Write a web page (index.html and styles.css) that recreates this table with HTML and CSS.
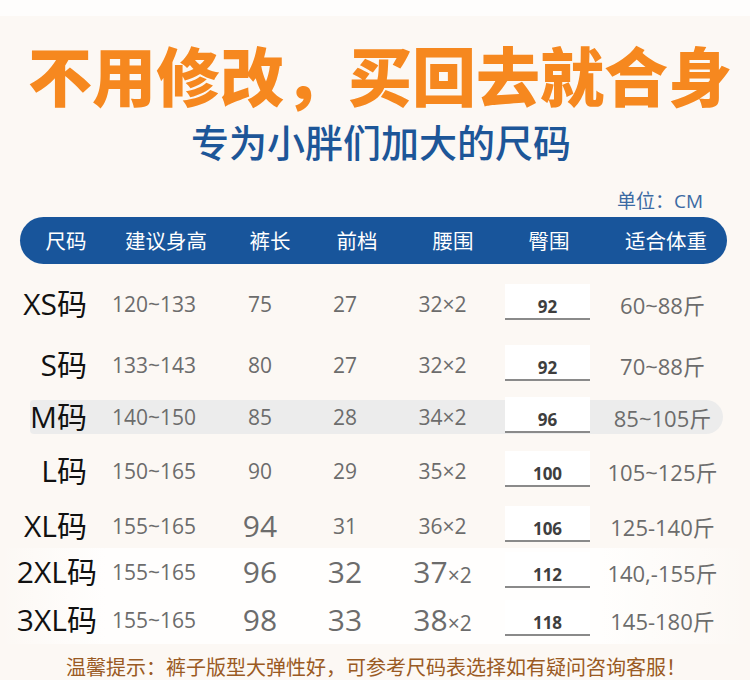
FILE: index.html
```html
<!DOCTYPE html>
<html lang="zh">
<head>
<meta charset="utf-8">
<link rel="stylesheet" href="styles.css">
</head>
<body>
<div class="page">
  <div class="topstrip"></div>
  <h1 class="title">不用修改，买回去就合身</h1>
  <h2 class="subtitle">专为小胖们加大的尺码</h2>
  <div class="unit">单位：CM</div>
  <div class="thead">
    <div class="th">尺码</div>
    <div class="th">建议身高</div>
    <div class="th">裤长</div>
    <div class="th">前档</div>
    <div class="th">腰围</div>
    <div class="th">臀围</div>
    <div class="th th-last">适合体重</div>
  </div>
  <div class="rows">
    <div class="row r-xs">
      <div class="size">XS码</div>
      <div class="h">120~133</div>
      <div class="v">75</div>
      <div class="v">27</div>
      <div class="v">32×2</div>
      <div class="hip"><span>92</span></div>
      <div class="v wt">60~88斤</div>
    </div>
    <div class="row r-s">
      <div class="size">S码</div>
      <div class="h">133~143</div>
      <div class="v">80</div>
      <div class="v">27</div>
      <div class="v">32×2</div>
      <div class="hip"><span>92</span></div>
      <div class="v wt">70~88斤</div>
    </div>
    <div class="row r-m">
      <div class="band"></div>
      <div class="size">M码</div>
      <div class="h">140~150</div>
      <div class="v">85</div>
      <div class="v">28</div>
      <div class="v">34×2</div>
      <div class="hip"><span>96</span></div>
      <div class="v wt">85~105斤</div>
    </div>
    <div class="row r-l">
      <div class="size">L码</div>
      <div class="h">150~165</div>
      <div class="v">90</div>
      <div class="v">29</div>
      <div class="v">35×2</div>
      <div class="hip"><span>100</span></div>
      <div class="v wt">105~125斤</div>
    </div>
    <div class="row r-xl">
      <div class="size">XL码</div>
      <div class="h">155~165</div>
      <div class="v big">94</div>
      <div class="v">31</div>
      <div class="v">36×2</div>
      <div class="hip"><span>106</span></div>
      <div class="v wt">125-140斤</div>
    </div>
    <div class="row r-2xl">
      <div class="size wide">2XL码</div>
      <div class="h">155~165</div>
      <div class="v big">96</div>
      <div class="v big">32</div>
      <div class="v"><span class="big">37</span>×2</div>
      <div class="hip"><span>112</span></div>
      <div class="v wt">140,-155斤</div>
    </div>
    <div class="row r-3xl">
      <div class="size wide">3XL码</div>
      <div class="h">155~165</div>
      <div class="v big">98</div>
      <div class="v big">33</div>
      <div class="v"><span class="big">38</span>×2</div>
      <div class="hip"><span>118</span></div>
      <div class="v wt">145-180斤</div>
    </div>
  </div>
  <p class="tip">温馨提示：裤子版型大弹性好，可参考尺码表选择如有疑问咨询客服！</p>
</div>
</body>
</html>
```
FILE: styles.css
```css
html, body {
  margin: 0;
  padding: 0;
}
body {
  background: #fcf8f4;
  font-family: "Open Sans", "Noto Sans CJK SC", sans-serif;
  width: 750px;
  height: 680px;
  overflow: hidden;
}
.page {
  position: relative;
  width: 750px;
  height: 680px;
}
.topstrip {
  height: 16px;
  background: #fefdfc;
}
.title {
  margin: 22px 0 0 10px;
  height: 70px;
  line-height: 70px;
  font-family: "Noto Sans CJK SC", sans-serif;
  font-weight: 900;
  font-size: 64px;
  color: #f6881f;
  text-align: center;
}
.subtitle {
  margin: 11px 0 0 12px;
  height: 44px;
  line-height: 44px;
  font-family: "Noto Sans CJK SC", sans-serif;
  font-weight: 500;
  font-size: 38px;
  color: #1d5698;
  text-align: center;
}
.unit {
  margin-top: 28px;
  height: 20px;
  line-height: 20px;
  font-family: "Open Sans", "Noto Sans CJK SC", sans-serif;
  font-size: 19px;
  color: #3b6aa3;
  text-align: right;
  padding-right: 47px;
}
.thead {
  margin: 6px 0 0 20px;
  width: 707px;
  height: 47px;
  background: #18559b;
  border-radius: 24px;
  display: grid;
  grid-template-columns: 92px 108px 100px 74px 118px 74px 141px;
  align-items: center;
}
.th {
  color: #ffffff;
  font-family: "Noto Sans CJK SC", sans-serif;
  font-size: 20.5px;
  text-align: center;
  line-height: 47px;
  white-space: nowrap;
}
.th-last {
  padding-left: 19px;
}
.rows {
  padding-top: 10px;
}
.row {
  position: relative;
  display: grid;
  grid-template-columns: 100px 125px 70px 100px 95px 115px 115px;
  align-items: center;
  color: #6c6c6c;
  font-size: 21px;
}
.r-xs { height: 60px; }
.r-s { height: 62px; }
.r-m { height: 42px; }
.r-l { height: 66px; }
.r-xl { height: 44px; }
.r-2xl { height: 48px; }
.r-3xl { height: 48px; }
.r-2xl, .r-3xl {
  background: linear-gradient(to right, rgba(255,255,255,0) 0, #fffefd 14%, #fffefd 80%, rgba(255,255,255,0) 100%);
}
.row > div {
  position: relative;
}
.row > .band {
  position: absolute;
  left: 30px;
  right: 27px;
  top: 4px;
  height: 34px;
  background: #ececec;
  border-radius: 4px 17px 17px 4px;
}
.size {
  color: #111;
  font-size: 30px;
  text-align: right;
  padding-right: 13px;
  line-height: 36px;
  white-space: nowrap;
}
.size.wide {
  padding-right: 3px;
}
.h {
  padding-left: 12px;
  white-space: nowrap;
}
.v {
  text-align: center;
  white-space: nowrap;
}
.wt {
  font-size: 22px;
}
.big {
  font-size: 30px;
  line-height: 36px;
}
.hip {
  align-self: stretch;
  display: flex;
  align-items: center;
  justify-content: center;
}
.hip span {
  display: block;
  width: 85px;
  text-align: center;
  font-size: 17px;
  font-weight: 700;
  color: #3e3e3e;
  background: #ffffff;
  line-height: 22px;
  padding-top: 12px;
  margin-bottom: 4px;
  border-bottom: 2px solid #8a8a8a;
}
.tip {
  margin: 11px 0 0 0;
  line-height: 24px;
  font-family: "Noto Sans CJK SC", sans-serif;
  font-size: 20px;
  color: #9a5a23;
  text-align: center;
  padding-left: 2px;
  white-space: nowrap;
}
```
